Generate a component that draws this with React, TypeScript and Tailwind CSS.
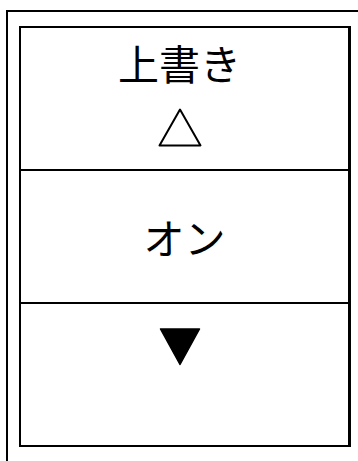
import React from "react";

const font = { fontFamily: '"Noto Sans CJK JP", "Noto Sans", sans-serif' };

const App = () => {
  return (
    <div className="w-[358px] h-[461px] overflow-hidden bg-white" style={font}>
      <div className="ml-[6px] mt-[10px] w-[400px] h-[500px] border-l-2 border-t-2 border-black">
        <div className="ml-[11px] mt-[14px] w-[332px] h-[421px] border-2 border-r-[3px] border-black flex flex-col text-black">
          {/* title + outline arrow */}
          <div className="h-[141px] pr-[10px] flex flex-col items-center">
            <div className="mt-[14px] text-[41px] leading-[41px]">上書き</div>
            <svg className="mt-[24px]" width="46" height="42" viewBox="0 0 46 42">
              <path
                d="M23 2.5 L43.5 38.5 L2.5 38.5 Z"
                fill="none"
                stroke="black"
                strokeWidth="2"
                strokeLinejoin="round"
              />
            </svg>
          </div>
          {/* current value */}
          <div className="h-[135px] border-y-2 border-black flex items-center justify-center">
            <span className="text-[41px] leading-[41px]">オン</span>
          </div>
          {/* down arrow */}
          <div className="flex-1 pr-[10px] flex justify-center">
            <svg className="mt-[24px]" width="42" height="38" viewBox="0 0 42 38">
              <path d="M1.5 1 L40.5 1 L21 36.5 Z" fill="black" stroke="black" strokeWidth="1.5" strokeLinejoin="round" />
            </svg>
          </div>
        </div>
      </div>
    </div>
  );
};

export default App;
